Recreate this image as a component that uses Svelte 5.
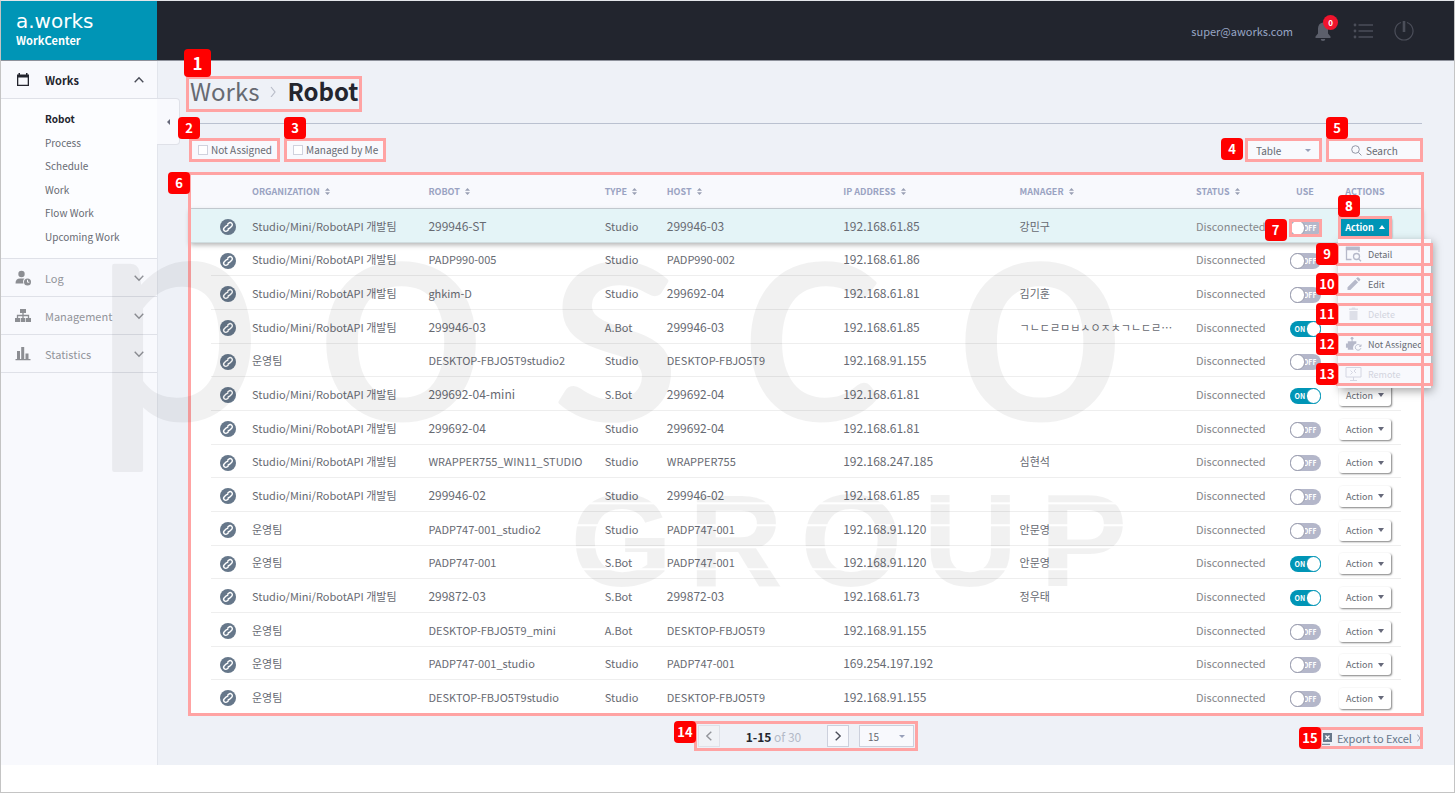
<script>
  const subMenu = ["Robot", "Process", "Schedule", "Work", "Flow Work", "Upcoming Work"];
  const columns = ["ORGANIZATION", "ROBOT", "TYPE", "HOST", "IP ADDRESS", "MANAGER", "STATUS"];
  const team = "Studio/Mini/RobotAPI 개발팀";
  const ops = "운영팀";

  let rows = $state(
    [
      [team, "299946-ST", "Studio", "299946-03", "192.168.61.85", "강민구", false],
      [team, "PADP990-005", "Studio", "PADP990-002", "192.168.61.86", "", false],
      [team, "ghkim-D", "Studio", "299692-04", "192.168.61.81", "김기훈", false],
      [team, "299946-03", "A.Bot", "299946-03", "192.168.61.85", "ㄱㄴㄷㄹㅁㅂㅅㅇㅈㅊㄱㄴㄷㄹ…", true],
      [ops, "DESKTOP-FBJO5T9studio2", "Studio", "DESKTOP-FBJO5T9", "192.168.91.155", "", false],
      [team, "299692-04-mini", "S.Bot", "299692-04", "192.168.61.81", "", true],
      [team, "299692-04", "Studio", "299692-04", "192.168.61.81", "", false],
      [team, "WRAPPER755_WIN11_STUDIO", "Studio", "WRAPPER755", "192.168.247.185", "심현석", false],
      [team, "299946-02", "Studio", "299946-02", "192.168.61.85", "", false],
      [ops, "PADP747-001_studio2", "Studio", "PADP747-001", "192.168.91.120", "안문영", false],
      [ops, "PADP747-001", "S.Bot", "PADP747-001", "192.168.91.120", "안문영", true],
      [team, "299872-03", "S.Bot", "299872-03", "192.168.61.73", "정우태", true],
      [ops, "DESKTOP-FBJO5T9_mini", "A.Bot", "DESKTOP-FBJO5T9", "192.168.91.155", "", false],
      [ops, "PADP747-001_studio", "Studio", "PADP747-001", "169.254.197.192", "", false],
      [ops, "DESKTOP-FBJO5T9studio", "Studio", "DESKTOP-FBJO5T9", "192.168.91.155", "", false],
    ].map(([org, robot, type, host, ip, manager, use]) => ({ org, robot, type, host, ip, manager, use }))
  );
  let open = $state(0);

  const numeric = (v) => /^\d/.test(v);
</script>

{#snippet mark(n, place)}
  <span class="mark {place}"><b>{n}</b></span>
{/snippet}

{#snippet chevron(dir)}
  <svg class="chevron {dir}" viewBox="0 0 10 10" width="10" height="10"><path d="M.7 2.7 5 7.2l4.3-4.5" /></svg>
{/snippet}

<div class="page">
  <header>
    <a class="brand" href="#home">
      <span class="logo">a.works</span>
      <span class="product">WorkCenter</span>
    </a>
    <div class="tools">
      <span class="user">super@aworks.com</span>
      <button class="bell" aria-label="Notifications">
        <svg viewBox="0 0 18 20" width="18" height="20"><path d="M9 1.5c-3.4.6-5 3-5 6v5l-2.5 3V17h15v-1.500L14 12.500v-5c0-3-1.600-5.400-5-6zM6.700 18a2.300 2 0 0 0 4.600 0z" fill="#5c5f6b" /></svg>
        <span class="count">0</span>
      </button>
      <button aria-label="List">
        <svg viewBox="0 0 20 18" width="20" height="18">
          <path d="M5.500 3H20M5.500 9H20M5.500 15H20" stroke="#4b4e59" stroke-width="1.500" />
          <circle cx="2" cy="3" r="1.400" fill="#4b4e59" /><circle cx="2" cy="9" r="1.400" fill="#4b4e59" /><circle cx="2" cy="15" r="1.400" fill="#4b4e59" />
        </svg>
      </button>
      <button aria-label="Log out">
        <svg viewBox="0 0 20 20" width="20" height="20" fill="none" stroke="#4b4e59">
          <path d="M7 1.500a9 9 0 1 0 6 0" stroke-width="1.200" /><path d="M10 0v11" stroke-width="2.600" />
        </svg>
      </button>
    </div>
  </header>

  <div class="body">
    <nav>
      <a class="group active" href="#works">
        <svg class="gicon" viewBox="0 0 16 16" width="16" height="16"><path d="M3.500 1h1.500v1.500h6V1h1.500v1.500H14V14H2V2.500h1.500zM3.300 5.500v7.200h9.400V5.500z" fill="#23252e" fill-rule="evenodd" /></svg>
        Works {@render chevron("up")}
      </a>
      <ul>
        {#each subMenu as name, i}
          <li><a class:current={i === 0} href="#{name}">{name}</a></li>
        {/each}
      </ul>
      <a class="group" href="#log">
        <svg class="gicon" viewBox="0 0 16 16" width="16" height="16" fill="#8c8e93">
          <circle cx="6.500" cy="4" r="3.200" /><path d="M.5 13.500c0-3.500 1.500-5 4.500-5h4.500a4.500 4.500 0 0 0-1 5z" /><circle cx="12.500" cy="12" r="3.500" />
          <path d="M12.500 9.800v2.400h1.800" stroke="#f8f9fd" fill="none" />
        </svg>
        Log {@render chevron("down")}
      </a>
      <a class="group" href="#management">
        <svg class="gicon" viewBox="0 0 16 16" width="16" height="16" fill="#8c8e93">
          <path d="M5 1h6v4H5zM0 10h5v4H0zM5.700 10h4.600v4H5.700zM11 10h5v4h-5z" /><path d="M8 5v5M2.500 10V7.500h11V10" stroke="#8c8e93" stroke-width="1.300" fill="none" />
        </svg>
        Management {@render chevron("down")}
      </a>
      <a class="group" href="#statistics">
        <svg class="gicon" viewBox="0 0 16 16" width="16" height="16" fill="#8c8e93"><path d="M2 5h3v8H2zM6.200 1h3v12h-3zM10.500 7.500h3V13h-3zM.5 13h15v1.300H.5z" /></svg>
        Statistics {@render chevron("down")}
      </a>
      <button class="fold" aria-label="Collapse menu"></button>
    </nav>

    <main>
      <div class="title">
        <h1><span>Works</span>
          <svg viewBox="0 0 8 12" width="8" height="12"><path d="M2 2l4 5-4 5" fill="none" stroke="#b9bdc9" stroke-width="1.200" /></svg>
          <strong>Robot</strong>{@render mark(1, "above wide")}
        </h1>
      </div>

      <div class="filters">
        <label class="check"><input type="checkbox" />Not Assigned{@render mark(2, "above out")}</label>
        <label class="check"><input type="checkbox" />Managed by Me{@render mark(3, "above")}</label>
        <div class="select view">
          <select aria-label="View"><option>Table</option></select>{@render mark(4, "left apart")}
        </div>
        <button class="search">
          <svg viewBox="0 0 11 11" width="11" height="11" fill="none" stroke="#9296a5"><circle cx="4.500" cy="4.500" r="3.800" /><path d="M7.400 7.400l3 3" /></svg>
          Search{@render mark(5, "above")}
        </button>
      </div>

      <div class="panel">
        <table>
          <colgroup>
            <col class="gutter" /><col class="link" /><col /><col /><col class="type" /><col /><col /><col />
            <col class="status" /><col class="use" /><col class="act" /><col class="gutter" />
          </colgroup>
          <thead>
            <tr>
              <th></th><th></th>
              {#each columns as name}
                <th>{name}<svg class="sort" viewBox="0 0 5 7" width="5" height="7"><path d="M2.500 0 5 2.700H0zM2.500 7 5 4.300H0z" /></svg></th>
              {/each}
              <th class="mid">USE</th><th class="mid">ACTIONS</th><th></th>
            </tr>
          </thead>
          <tbody>
            {#each rows as row, i}
              <tr class:selected={open === i}>
                <td></td>
                <td class="mid">
                  <svg class="chain" viewBox="0 0 16 16" width="16" height="16">
                    <circle cx="8" cy="8" r="8" fill="#66778a" />
                    <path d="M7.300 5.600 8.700 4.200a2.100 2.100 0 0 1 3 3L9.900 9a2.100 2.100 0 0 1-2.200.5M8.700 10.400l-1.400 1.400a2.100 2.100 0 0 1-3-3L6.100 7a2.100 2.100 0 0 1 2.200-.5" fill="none" stroke="#fff" stroke-width="1.400" />
                  </svg>
                </td>
                <td>{row.org}</td>
                <td class:num={numeric(row.robot)}>{row.robot}</td>
                <td>{row.type}</td>
                <td class:num={numeric(row.host)}>{row.host}</td>
                <td class="num">{row.ip}</td>
                <td>{row.manager}</td>
                <td class="state">Disconnected</td>
                <td class="mid">
                  <label class="toggle">
                    <input type="checkbox" aria-label="Use {row.robot}" bind:checked={row.use} />
                    <span>{row.use ? "ON" : "OFF"}</span>
                    {#if i === 0}{@render mark(7, "left tight apart")}{/if}
                  </label>
                </td>
                <td class="mid">
                  <div class="action">
                    <button class:on={open === i} onclick={() => (open = open === i ? -1 : i)}>
                      Action<i></i>
                      {#if i === 0}{@render mark(8, "above tight")}{/if}
                    </button>
                    {#if open === i}
                      <div class="menu">
                        <button>
                          <svg viewBox="0 0 16 16" width="16" height="16" fill="none" stroke="#b6b9ca" stroke-width="1.300"><path d="M13.500 6V1.500H1v12h5M1 3h12.500" /><path d="M1 1.500h12.500v2H1z" fill="#b6b9ca" /><circle cx="11" cy="10.500" r="3" /><path d="M13 12.800l2.500 2.500" /></svg>
                          Detail{@render mark(9, "left edge")}
                        </button>
                        <button>
                          <svg viewBox="0 0 16 16" width="16" height="16" fill="#b6b9ca"><path d="M2 11.200 9.800 3.400l2.800 2.800L4.800 14H2zM10.600 2.600l1.200-1.200q.6-.5 1.200 0l1.600 1.600q.5.6 0 1.200l-1.200 1.200z" /></svg>
                          Edit{@render mark(10, "left edge")}
                        </button>
                        <button disabled>
                          <svg viewBox="0 0 16 16" width="16" height="16" fill="#dddfe8"><path d="M4 5h8v9H4zM3.500 2.500H6l.5-1h3l.5 1h2.500V4h-9z" /></svg>
                          Delete{@render mark(11, "left edge")}
                        </button>
                        <button>
                          <svg viewBox="0 0 18 16" width="18" height="16" fill="#b6b9ca"><circle cx="7.500" cy="2" r="1.500" /><path d="M7 3h1v2H7zM3 5h9v2.500a4.500 4.500 0 0 0-3 6.500H3v-2H1V7.500h2z" /><path d="M16.500 10a3 3 0 1 0 .3 2.500M17 8.500v2h-2" fill="none" stroke="#b6b9ca" /></svg>
                          Not Assigned{@render mark(12, "left edge")}
                        </button>
                        <button disabled>
                          <svg viewBox="0 0 16 16" width="16" height="16" fill="none" stroke="#d4d6e2"><path d="M.5 1.500h15v9.500H.5zM8 11v3.500M4.500 14.500h7M10.500 3l-2 2 2 2M5 4.500l2 2-2 2" /></svg>
                          Remote{@render mark(13, "left edge")}
                        </button>
                      </div>
                    {/if}
                  </div>
                </td>
                <td></td>
              </tr>
            {/each}
          </tbody>
        </table>
        {@render mark(6, "left edge")}
      </div>

      <div class="foot">
        <div class="pager">
          <button disabled aria-label="Previous">{@render chevron("prev")}</button>
          <p><strong>1-15</strong> of 30</p>
          <button aria-label="Next">{@render chevron("next")}</button>
          <div class="select size"><select aria-label="Page size"><option>15</option></select></div>
          {@render mark(14, "left edge")}
        </div>
        <a class="export" href="#export">
          <svg viewBox="0 0 12 13" width="12" height="13"><path d="M3 1h9v9H3z" fill="#66778a" /><path d="M5.500 3.500l4 4m0-4-4 4" stroke="#fff" stroke-width="1.300" /><path d="M.7 3v9.300H10" fill="none" stroke="#66778a" /></svg>
          Export to Excel
          <svg viewBox="0 0 5 8" width="5" height="8"><path d="M.3.500 3 4 .3 7.500" fill="none" stroke="#9aa3b2" /></svg>
          {@render mark(15, "left tight")}
        </a>
      </div>
    </main>
  </div>

  <svg class="watermark" viewBox="0 0 1455 793" aria-hidden="true">
    <defs>
      <pattern id="bars" width="10" height="22" y="20" patternUnits="userSpaceOnUse"><path d="M0 0h10v20H0z" fill="#fff" /></pattern>
      <mask id="slits"><path d="M0 0h1455v793H0z" fill="url(#bars)" /></mask>
    </defs>
    <text class="brand-word" y="418" x="92 315 550 740 955">posco</text>
    <g mask="url(#slits)"><text class="group-word" y="586" x="570 688 800 923 1040">GROUP</text></g>
  </svg>
</div>

<style>
  :global(body) {
    margin: 0;
  }
  .page {
    position: relative;
    box-sizing: border-box;
    min-height: 100vh;
    border: 1px solid #c4c4c4;
    border-top-color: #e4e6ea;
    background: #fff;
    font-family: "Noto Sans CJK KR", sans-serif;
    font-size: 11px;
    color: #676a72;
    overflow: hidden;
  }
  button,
  select {
    font-family: inherit;
    color: inherit;
  }
  button {
    padding: 0;
    border: 0;
    background: none;
    cursor: pointer;
  }
  a {
    color: inherit;
    text-decoration: none;
  }
  header {
    display: flex;
    justify-content: space-between;
    height: 59px;
    border-bottom: 1px solid #8e929c;
    background: #22252e;
  }
  .brand {
    display: flex;
    flex-direction: column;
    box-sizing: border-box;
    width: 156px;
    padding: 9px 15px;
    background: #0095b6;
    color: #fff;
  }
  .logo {
    font: 20px/22px "DejaVu Sans", sans-serif;
  }
  .product {
    font-size: 11px;
    line-height: 17px;
    font-weight: bold;
  }
  .tools {
    display: flex;
    align-items: center;
    gap: 21px;
    padding-right: 40px;
    color: #98a6c4;
  }
  .tools button {
    position: relative;
    display: flex;
  }
  .count {
    position: absolute;
    left: 9px;
    top: -6px;
    width: 15px;
    border-radius: 8px;
    background: #f0142d;
    color: #fff;
    font-size: 8px;
    font-weight: bold;
    line-height: 15px;
  }
  .body {
    display: flex;
    background: #eef1f7;
  }
  nav {
    position: relative;
    flex: none;
    box-sizing: border-box;
    width: 157px;
    border-right: 1px solid #e2e5ec;
    background: #f8f9fd;
  }
  .group {
    display: flex;
    align-items: center;
    box-sizing: border-box;
    height: 38px;
    padding: 0 13px 0 14px;
    border-bottom: 1px solid #dfe1e8;
    color: #92949a;
  }
  .group.active {
    color: #23252e;
    font-weight: bold;
  }
  .gicon {
    margin-right: 14px;
  }
  .chevron {
    fill: none;
    stroke: #92949a;
    stroke-width: 1.4;
  }
  .group .chevron {
    margin-left: auto;
  }
  .up {
    transform: rotate(180deg);
    stroke: #4b4e59;
  }
  .prev {
    transform: rotate(90deg);
  }
  .next {
    transform: rotate(-90deg);
    stroke: #4b4e59;
  }
  nav ul {
    display: flex;
    flex-direction: column;
    justify-content: space-between;
    box-sizing: border-box;
    height: 160px;
    margin: 0;
    padding: 9px 0 10px 44px;
    border-bottom: 1px solid #dfe1e8;
    background: #fcfdff;
    list-style: none;
    font-size: 10px;
    line-height: 22px;
  }
  .current {
    color: #23252e;
    font-weight: bold;
  }
  .fold {
    position: absolute;
    left: 100%;
    top: 37px;
    width: 23px;
    height: 47px;
    border: 1px solid #dfe1e8;
    border-left: 0;
    border-radius: 0 4px 4px 0;
    background: #f8f9fd;
  }
  .fold::before {
    content: "";
    display: block;
    margin-left: 10px;
    width: 0;
    border: 3px solid transparent;
    border-left-width: 0;
    border-right-color: #66697a;
  }
  main {
    flex: 1;
    min-width: 0;
    padding: 19px 32px 16px;
  }
  .title {
    display: flex;
    padding-bottom: 15px;
    border-bottom: 1px solid #bac1d0;
  }
  h1 {
    position: relative;
    display: flex;
    align-items: center;
    gap: 10px;
    margin: 0;
    padding-bottom: 6px;
    font-size: 24px;
    line-height: 22px;
    font-weight: 400;
  }
  h1 strong {
    color: #23252e;
  }
  .filters {
    display: flex;
    gap: 10px;
    margin: 17px 2px 15px;
    height: 18px;
    font-size: 10px;
    line-height: 18px;
  }
  .check,
  .search,
  .select {
    position: relative;
    display: flex;
    align-items: center;
    box-sizing: border-box;
    background: #f8f9fd;
  }
  .check {
    gap: 3px;
    padding: 0 5px 0 6px;
  }
  .check input {
    appearance: none;
    width: 10px;
    height: 10px;
    margin: 0;
    border: 1px solid #d0d2dd;
    background: #fff;
  }
  .view {
    width: 71px;
    margin-left: auto;
  }
  .search {
    justify-content: center;
    gap: 4px;
    width: 91px;
    font-size: 10px;
  }
  .select select {
    appearance: none;
    width: 100%;
    height: 100%;
    padding: 0 8px;
    border: 0;
    background: none;
    font-size: 10px;
  }
  .select::after {
    content: "";
    position: absolute;
    right: 8px;
    border: 3px solid transparent;
    border-bottom-width: 0;
    border-top-color: #98a0ba;
  }
  .panel {
    position: relative;
    background: #fff;
  }
  table {
    width: 100%;
    table-layout: fixed;
    border-collapse: separate;
    border-spacing: 0;
  }
  .gutter {
    width: 21px;
  }
  .link {
    width: 41px;
  }
  .type {
    width: 62px;
  }
  .status {
    width: 85px;
  }
  .use {
    width: 48px;
  }
  .act {
    width: 72px;
  }
  th {
    height: 33px;
    padding: 1px 0 0;
    border-bottom: 1px solid #ccd3da;
    background: #f8f9fd;
    color: #9aa3c2;
    font-size: 9px;
    text-align: left;
    white-space: nowrap;
  }
  .sort {
    margin-left: 5px;
    fill: #9aa0b4;
  }
  td {
    box-sizing: border-box;
    height: 34px;
    padding: 0;
    border-bottom: 1px solid #eeeeee;
    line-height: 18px;
    white-space: nowrap;
  }
  .num {
    font-size: 12px;
  }
  tr:nth-child(3n + 2) td {
    height: 33px;
  }
  td:first-child,
  td:last-child,
  tr:last-child td {
    border-bottom-color: transparent;
  }
  .mid {
    text-align: center;
  }
  td.state {
    color: #85868a;
  }
  .selected {
    position: relative;
    z-index: 1;
    box-shadow: 0 2px 5px rgba(0, 0, 0, 0.3);
  }
  .selected td {
    background: #e4f4f7;
    border-bottom-color: #d0dde0;
  }
  .chain {
    display: block;
    margin: 3px 0 0 9px;
  }
  .toggle {
    position: relative;
    display: block;
    width: 31px;
    height: 16px;
    margin: 4px auto 0;
  }
  .toggle input {
    appearance: none;
    display: block;
    width: 31px;
    height: 16px;
    margin: 0;
    border-radius: 8px;
    background: #b4b7ca;
  }
  .toggle input::before {
    content: "";
    display: block;
    box-sizing: border-box;
    width: 15px;
    height: 16px;
    border: 1px solid #9598aa;
    border-radius: 8px;
    background: #fff;
  }
  .toggle input:checked {
    background: #0095b6;
  }
  .toggle input:checked::before {
    margin-left: 16px;
    border-color: #0095b6;
  }
  .toggle span:not(.mark) {
    position: absolute;
    right: 4px;
    top: 0;
    color: #fff;
    font-size: 7px;
    font-weight: bold;
    line-height: 16px;
    clip-path: inset(0 0 0 2px);
  }
  .toggle input:checked + span {
    left: 5px;
    right: auto;
    clip-path: none;
  }
  .action {
    position: relative;
    width: 52px;
    margin: 3px auto 0;
  }
  .action > button {
    position: relative;
    display: flex;
    align-items: center;
    justify-content: center;
    gap: 5px;
    width: 52px;
    height: 21px;
    border-radius: 3px;
    background: #fff;
    box-shadow: 1px 1px 2px rgba(0, 0, 0, 0.5);
    font-size: 9px;
  }
  .action i {
    border: 3px solid transparent;
    border-top: 4px solid #66697a;
    border-bottom: 0;
  }
  .action .on {
    background: #0095b6;
    color: #fff;
    font-weight: bold;
  }
  .on i {
    border-top: 0;
    border-bottom: 4px solid #fff;
  }
  .menu {
    position: absolute;
    left: -1px;
    top: 22px;
    width: 93px;
    padding: 6px 0 0;
    background: #f8f9fd;
    box-shadow: 2px 3px 9px rgba(0, 0, 0, 0.35);
  }
  .menu button {
    position: relative;
    display: flex;
    align-items: center;
    gap: 6px;
    width: 100%;
    height: 19px;
    margin-bottom: 11px;
    padding-left: 7px;
    font-size: 9px;
    white-space: nowrap;
  }
  .menu button:last-child {
    margin-bottom: 4px;
  }
  .menu button svg {
    width: 17px;
  }
  .menu button:disabled {
    color: #d2d4de;
  }
  .foot {
    display: grid;
    grid-template-columns: 1fr auto 1fr;
    margin-top: 9px;
  }
  .pager {
    position: relative;
    grid-column: 2;
    display: flex;
    align-items: center;
    padding: 2px;
    height: 22px;
  }
  .pager button {
    display: flex;
    align-items: center;
    justify-content: center;
    box-sizing: border-box;
    width: 22px;
    height: 22px;
    border: 1px solid #ccd0dc;
    background: #f8f9fd;
  }
  .pager button:disabled {
    border-color: #dfe1e8;
    background: #f0f2f6;
  }
  .pager p {
    width: 107px;
    margin: 0;
    color: #b4bac8;
    font-size: 12px;
    text-align: center;
  }
  .pager strong {
    color: #23252e;
  }
  .size {
    width: 55px;
    height: 22px;
    margin-left: 10px;
    border: 1px solid #ccd0dc;
  }
  .export {
    position: relative;
    display: flex;
    align-items: center;
    justify-self: end;
    gap: 5px;
    height: 20px;
    margin-top: 5px;
    color: #66778a;
  }
  .mark {
    position: absolute;
    inset: -3px;
    z-index: 3;
    border: 3px solid #ffa3a3;
    pointer-events: none;
  }
  .mark.tight {
    inset: -1px;
  }
  .mark.wide {
    inset: -4px;
  }
  .mark.edge {
    inset: -2px;
  }
  .mark b {
    position: absolute;
    width: 22px;
    border-radius: 4px;
    background: #f00;
    color: #fff;
    font-size: 13px;
    line-height: 22px;
    text-align: center;
  }
  .above b {
    bottom: 100%;
    left: -3px;
    margin-bottom: 2px;
  }
  .out b {
    left: -14px;
  }
  .wide b {
    left: -5px;
    width: 27px;
    font-size: 17px;
    line-height: 28px;
  }
  .left b {
    right: 100%;
    top: -3px;
    margin-right: 1px;
  }
  .apart b {
    margin-right: 5px;
  }
  .watermark {
    position: absolute;
    left: 0;
    top: 0;
    z-index: 4;
    width: 100%;
    fill: #000;
    opacity: 0.05;
    pointer-events: none;
  }
  .brand-word {
    font: 302px Lato, sans-serif;
    stroke: #000;
    stroke-width: 4px;
    stroke-linejoin: round;
  }
  .group-word {
    font: bold 132px "Liberation Sans", sans-serif;
  }
</style>
